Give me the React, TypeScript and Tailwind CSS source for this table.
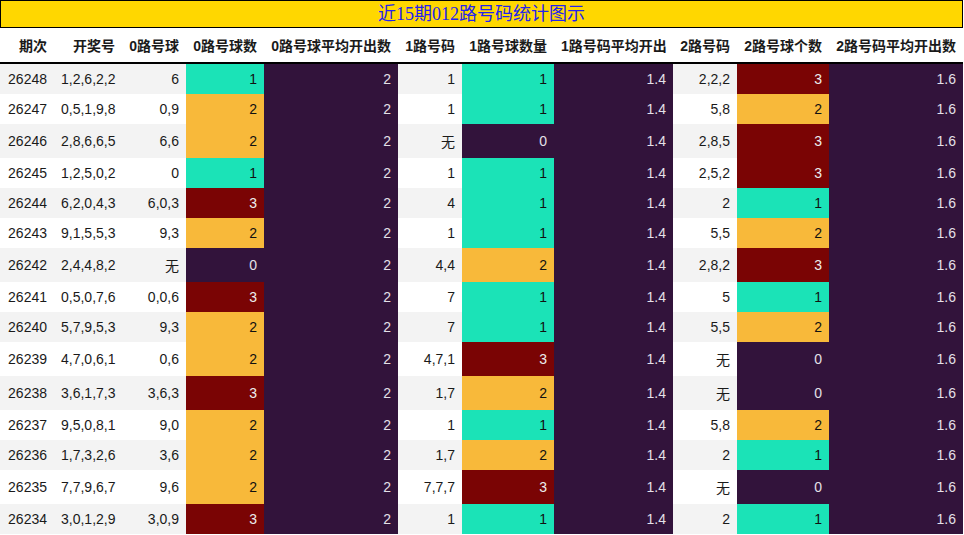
import React from "react";

type Row = {
  issue: string;
  draw: string;
  zero: string;
  zeroCount: number;
  one: string;
  oneCount: number;
  two: string;
  twoCount: number;
};

const rows: Row[] = [
  { issue: "26248", draw: "1,2,6,2,2", zero: "6", zeroCount: 1, one: "1", oneCount: 1, two: "2,2,2", twoCount: 3 },
  { issue: "26247", draw: "0,5,1,9,8", zero: "0,9", zeroCount: 2, one: "1", oneCount: 1, two: "5,8", twoCount: 2 },
  { issue: "26246", draw: "2,8,6,6,5", zero: "6,6", zeroCount: 2, one: "无", oneCount: 0, two: "2,8,5", twoCount: 3 },
  { issue: "26245", draw: "1,2,5,0,2", zero: "0", zeroCount: 1, one: "1", oneCount: 1, two: "2,5,2", twoCount: 3 },
  { issue: "26244", draw: "6,2,0,4,3", zero: "6,0,3", zeroCount: 3, one: "4", oneCount: 1, two: "2", twoCount: 1 },
  { issue: "26243", draw: "9,1,5,5,3", zero: "9,3", zeroCount: 2, one: "1", oneCount: 1, two: "5,5", twoCount: 2 },
  { issue: "26242", draw: "2,4,4,8,2", zero: "无", zeroCount: 0, one: "4,4", oneCount: 2, two: "2,8,2", twoCount: 3 },
  { issue: "26241", draw: "0,5,0,7,6", zero: "0,0,6", zeroCount: 3, one: "7", oneCount: 1, two: "5", twoCount: 1 },
  { issue: "26240", draw: "5,7,9,5,3", zero: "9,3", zeroCount: 2, one: "7", oneCount: 1, two: "5,5", twoCount: 2 },
  { issue: "26239", draw: "4,7,0,6,1", zero: "0,6", zeroCount: 2, one: "4,7,1", oneCount: 3, two: "无", twoCount: 0 },
  { issue: "26238", draw: "3,6,1,7,3", zero: "3,6,3", zeroCount: 3, one: "1,7", oneCount: 2, two: "无", twoCount: 0 },
  { issue: "26237", draw: "9,5,0,8,1", zero: "9,0", zeroCount: 2, one: "1", oneCount: 1, two: "5,8", twoCount: 2 },
  { issue: "26236", draw: "1,7,3,2,6", zero: "3,6", zeroCount: 2, one: "1,7", oneCount: 2, two: "2", twoCount: 1 },
  { issue: "26235", draw: "7,7,9,6,7", zero: "9,6", zeroCount: 2, one: "7,7,7", oneCount: 3, two: "无", twoCount: 0 },
  { issue: "26234", draw: "3,0,1,2,9", zero: "3,0,9", zeroCount: 3, one: "1", oneCount: 1, two: "2", twoCount: 1 },
];

const headers = [
  "期次",
  "开奖号",
  "0路号球",
  "0路号球数",
  "0路号球平均开出数",
  "1路号码",
  "1路号球数量",
  "1路号码平均开出",
  "2路号码",
  "2路号球个数",
  "2路号码平均开出数",
];

const widths = [54, 68, 64, 78, 134, 64, 92, 119, 64, 92, 134];

// count -> cell colour
const countClass: Record<number, string> = {
  0: "bg-[#32133b] text-[#e4e0e8]",
  1: "bg-[#1be3b7] text-[#111]",
  2: "bg-[#f8b93a] text-[#111]",
  3: "bg-[#7a0404] text-[#eee]",
};

const avgClass = "bg-[#32133b] text-[#e4e0e8]";
const cell = "px-[7px] py-[7px] text-right leading-[normal] whitespace-nowrap";

export default function App() {
  return (
    <div className="w-[964px] bg-white font-['Liberation_Sans','Noto_Sans_CJK_SC',sans-serif] text-[14px] text-[#1a1a1a]">
      {/* TITLE */}
      <div className="w-[963px] h-[28px] border border-black bg-[#ffd700] flex items-center justify-center">
        <span className="font-['Liberation_Serif','Noto_Sans_CJK_SC',serif] text-[18px] leading-none text-[#2323ee]">
          近15期012路号码统计图示
        </span>
      </div>

      {/* TABLE */}
      <table className="table-fixed border-collapse w-[963px]">
        <colgroup>
          {widths.map((w, i) => (
            <col key={i} style={{ width: w }} />
          ))}
        </colgroup>
        <thead>
          <tr className="border-b-2 border-black">
            {headers.map((h) => (
              <th key={h} className={`${cell} font-bold`}>
                {h}
              </th>
            ))}
          </tr>
        </thead>
        <tbody>
          {rows.map((r, i) => {
            const base = i % 2 === 0 ? "bg-[#f3f3f3]" : "bg-white";
            return (
              <tr key={r.issue}>
                <td className={`${cell} ${base}`}>{r.issue}</td>
                <td className={`${cell} ${base}`}>{r.draw}</td>
                <td className={`${cell} ${base}`}>{r.zero}</td>
                <td className={`${cell} ${countClass[r.zeroCount]}`}>{r.zeroCount}</td>
                <td className={`${cell} ${avgClass}`}>2</td>
                <td className={`${cell} ${base}`}>{r.one}</td>
                <td className={`${cell} ${countClass[r.oneCount]}`}>{r.oneCount}</td>
                <td className={`${cell} ${avgClass}`}>1.4</td>
                <td className={`${cell} ${base}`}>{r.two}</td>
                <td className={`${cell} ${countClass[r.twoCount]}`}>{r.twoCount}</td>
                <td className={`${cell} ${avgClass}`}>1.6</td>
              </tr>
            );
          })}
        </tbody>
      </table>
    </div>
  );
}
